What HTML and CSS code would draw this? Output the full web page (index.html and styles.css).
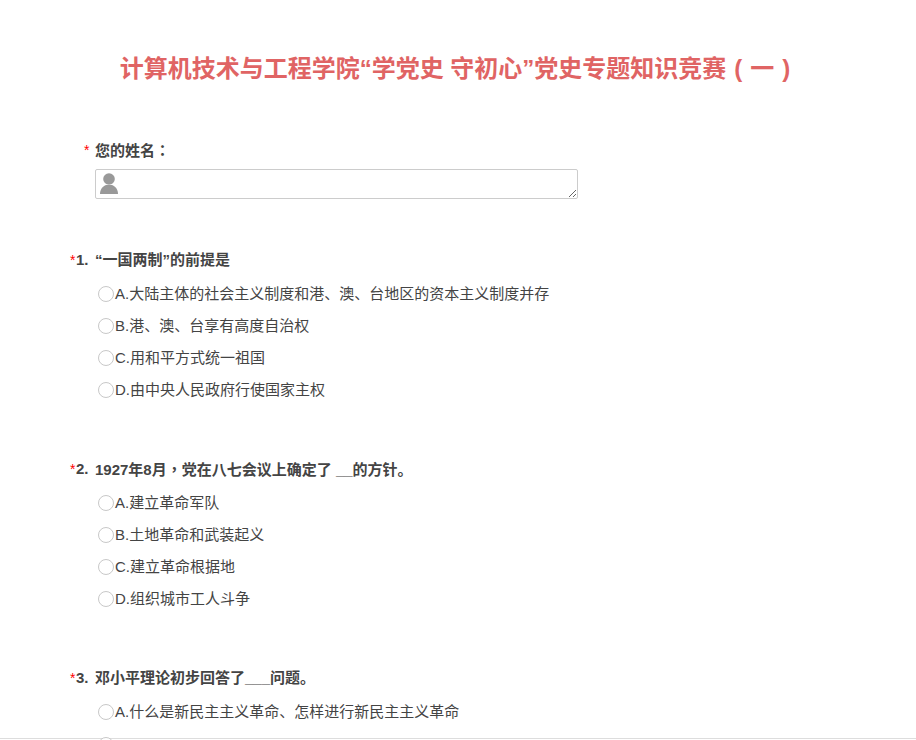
FILE: index.html
```html
<!DOCTYPE html>
<html lang="zh-CN">
<head>
<meta charset="utf-8">
<title>党史专题知识竞赛</title>
<link rel="stylesheet" href="styles.css">
</head>
<body>
<main class="page">
  <h1 class="title">计算机技术与工程学院“学党史 守初心”党史专题知识竞赛<span class="paren">(</span>一<span class="paren">)</span></h1>
  <section class="name-field">
    <div class="name-label"><span class="star">*</span><span>您的姓名<span class="tc" lang="zh-TW">：</span></span></div>
    <div class="name-input">
      <svg class="person" viewBox="0 0 18 21" aria-hidden="true"><circle cx="9" cy="6" r="5.800"/><path d="M0 21c0-5 3-8 6-9h6c3 1 6 4 6 9z"/></svg>
      <textarea class="name-text"></textarea>
    </div>
  </section>
  <section class="question">
    <div class="q-title"><span class="star">*</span><span class="q-num">1.</span><span>“一国两制”的前提是</span></div>
    <label class="option"><span class="radio"></span>A.大陆主体的社会主义制度和港、澳、台地区的资本主义制度并存</label>
    <label class="option"><span class="radio"></span>B.港、澳、台享有高度自治权</label>
    <label class="option"><span class="radio"></span>C.用和平方式统一祖国</label>
    <label class="option"><span class="radio"></span>D.由中央人民政府行使国家主权</label>
  </section>
  <section class="question">
    <div class="q-title"><span class="star">*</span><span class="q-num">2.</span><span>1927年8月<span class="tc" lang="zh-TW">，</span>党在八七会议上确定了 __的方针。</span></div>
    <label class="option"><span class="radio"></span>A.建立革命军队</label>
    <label class="option"><span class="radio"></span>B.土地革命和武装起义</label>
    <label class="option"><span class="radio"></span>C.建立革命根据地</label>
    <label class="option"><span class="radio"></span>D.组织城市工人斗争</label>
  </section>
  <section class="question">
    <div class="q-title"><span class="star">*</span><span class="q-num">3.</span><span>邓小平理论初步回答了___问题。</span></div>
    <label class="option"><span class="radio"></span>A.什么是新民主主义革命、怎样进行新民主主义革命</label>
  </section>
</main>
<div class="bottom-bar"><span class="peek-radio"></span></div>
</body>
</html>
```
FILE: styles.css
```css
html, body {
  margin: 0;
  padding: 0;
  height: 740px;
  overflow: hidden;
  background: #fff;
}
body {
  position: relative;
  font-family: "Liberation Sans", "Noto Sans CJK SC", sans-serif;
  font-size: 15px;
  color: #444;
}
.tc {
  font-family: "Noto Sans CJK TC", sans-serif;
}
.page {
  padding: 51px 0 0 70px;
}
.title {
  box-sizing: border-box;
  margin: 0 0 53px -70px;
  padding-left: 8px;
  width: 910px;
  text-align: center;
  font-size: 24px;
  line-height: 36px;
  font-weight: bold;
  color: #e06464;
}
.paren {
  display: inline-block;
  width: 24px;
  text-align: center;
}
.name-field {
  padding-left: 14px;
  margin-bottom: 51px;
}
.name-label {
  display: flex;
  height: 20px;
  font-weight: bold;
  line-height: 20px;
  margin-bottom: 9px;
}
.name-label .star {
  width: 11px;
}
.star {
  color: #f00;
  font-weight: normal;
  font-size: 14px;
}
.name-input {
  position: relative;
  margin-left: 11px;
  width: 483px;
  height: 30px;
}
.name-text {
  display: block;
  box-sizing: border-box;
  width: 100%;
  height: 100%;
  margin: 0;
  border: 1px solid #ccc;
  border-radius: 2px;
  background: transparent;
  outline: none;
}
.person {
  position: absolute;
  left: 5px;
  top: 4px;
  width: 18px;
  height: 21px;
  fill: #999;
}
.question {
  margin-bottom: 53px;
}
.q-title {
  display: flex;
  height: 20px;
  font-weight: bold;
  line-height: 20px;
  margin-bottom: 8px;
}
.q-title .star {
  width: 6px;
}
.q-num {
  width: 19px;
}
.option {
  display: flex;
  align-items: flex-start;
  height: 32px;
  line-height: 32px;
  padding-left: 28px;
  color: #444;
}
.radio, .peek-radio {
  box-sizing: border-box;
  width: 16px;
  height: 16px;
  border: 1.5px solid #c8c8c8;
  border-radius: 50%;
  background: #fff;
  flex: none;
}
.radio {
  margin: 8px 1px 0 0;
}
.peek-radio {
  position: absolute;
  left: 98px;
  top: -2px;
}
.bottom-bar {
  position: absolute;
  left: 0;
  right: 0;
  bottom: 0;
  box-sizing: border-box;
  height: 2px;
  border-top: 1px solid #ddd;
  background: #fff;
}
```
